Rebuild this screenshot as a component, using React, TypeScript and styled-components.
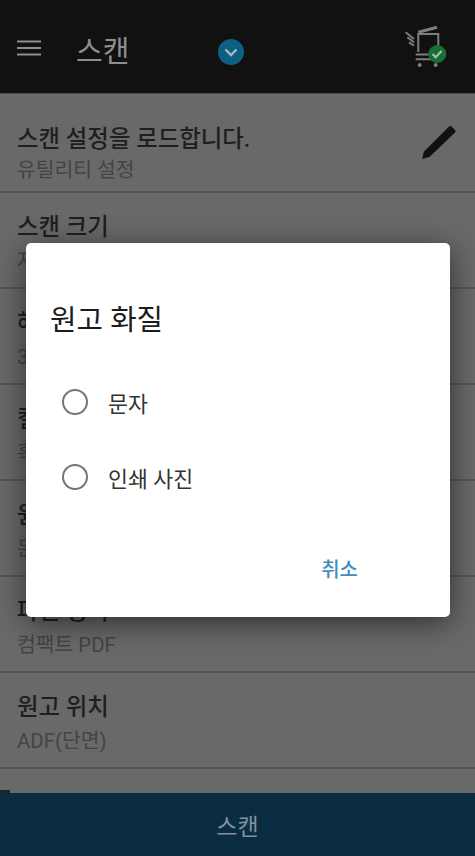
import React from 'react';
import styled, { createGlobalStyle } from 'styled-components';

const GlobalStyle = createGlobalStyle`
  html, body {
    margin: 0;
    padding: 0;
    background: #696969;
  }
  body {
    font-family: "Roboto", "Noto Sans CJK KR", sans-serif;
  }
`;

const settings = [
  { label: '스캔 설정을 로드합니다.', value: '유틸리티 설정', edit: true },
  { label: '스캔 크기', value: '자동' },
  { label: '해상도', value: '300 dpi' },
  { label: '컬러 모드', value: '흑백' },
  { label: '원고 화질', value: '문자' },
  { label: '파일 형식', value: '컴팩트 PDF' },
  { label: '원고 위치', value: 'ADF(단면)' },
];

const options = ['문자', '인쇄 사진'];

export default function App() {
  return (
    <Screen>
      <GlobalStyle />
      <Header>
        <MenuIcon viewBox="0 0 26 18">
          <path d="M1 2.500h24M1 9h24M1 15.500h24" />
        </MenuIcon>
        <HeaderTitle>스캔</HeaderTitle>
        <DropBadge viewBox="0 0 26 26">
          <circle cx="13" cy="13" r="13" fill="#0f5f85" />
          <path d="M7.500 10.500l5.500 5.500 5.500-5.500" fill="none" stroke="#a9b9c1" strokeWidth="2.400" />
        </DropBadge>
        <PrinterIcon viewBox="0 0 44 44">
          <g fill="none" stroke="#7d7d7d" strokeWidth="2">
            <path d="M1.700 7.300L10 14M3.300 12.300L10 17.300M5 17.300l5 3.400" />
            <path d="M14.300 27V9h20v18" />
            <path d="M14.300 7.300L33 2.300" strokeWidth="3" />
            <path d="M11.700 29.500H31M11.700 34.300H28" />
          </g>
          <circle cx="15.700" cy="40" r="2" fill="#7d7d7d" />
          <circle cx="31.700" cy="40" r="2" fill="#7d7d7d" />
          <circle cx="33.300" cy="29" r="9" fill="#1a6d35" />
          <path d="M28.500 29l3.200 3.300 5.800-6.300" fill="none" stroke="#a7c4ae" strokeWidth="2" />
        </PrinterIcon>
      </Header>

      <List>
        {settings.map((item, index) => (
          <Row key={item.label} $first={index === 0}>
            <RowText $first={index === 0}>
              <RowLabel>{item.label}</RowLabel>
              <RowValue>{item.value}</RowValue>
            </RowText>
            {item.edit && (
              <PencilIcon viewBox="0 0 36 36">
                <path d="M0 36l2-7.500L27 3.500c.8-.8 1.800-.8 2.600 0l3.400 3.400c.8.800.8 1.800 0 2.600L7.500 34z" fill="#111" />
              </PencilIcon>
            )}
          </Row>
        ))}
      </List>

      <ScanBar>
        <CornerMark />
        <ScanLabel>스캔</ScanLabel>
      </ScanBar>

      <Dialog>
        <DialogTitle>원고 화질</DialogTitle>
        <OptionList>
          {options.map(option => (
            <Option key={option}>
              <Radio />
              <OptionLabel>{option}</OptionLabel>
            </Option>
          ))}
        </OptionList>
        <DialogActions>
          <CancelButton>취소</CancelButton>
        </DialogActions>
      </Dialog>
    </Screen>
  );
}

const Screen = styled.div`
  position: relative;
  display: flex;
  flex-direction: column;
  width: 475px;
  height: 856px;
  overflow: hidden;
  background: #696969;
`;

const Header = styled.header`
  display: flex;
  align-items: center;
  flex: 0 0 94px;
  box-sizing: border-box;
  padding: 0 27px 0 16px;
  background: #111;
  border-bottom: 1px solid #4c4c4c;
`;

const MenuIcon = styled.svg`
  flex: none;
  width: 26px;
  height: 18px;
  margin-top: 2px;
  fill: none;
  stroke: #8f8f8f;
  stroke-width: 2.200;
`;

const HeaderTitle = styled.h1`
  flex: none;
  width: 113px;
  margin: 4px 0 0 34px;
  font-size: 29px;
  font-weight: 400;
  color: #8e8e8e;
`;

const DropBadge = styled.svg`
  flex: none;
  width: 26px;
  height: 26px;
  margin: 10px 0 0 29px;
`;

const PrinterIcon = styled.svg`
  flex: none;
  width: 44px;
  height: 44px;
  margin: 0 0 0 auto;
`;

const List = styled.div`
  flex: 1;
  min-height: 0;
  padding-top: 3px;
  overflow: hidden;
`;

const Row = styled.div<{ $first?: boolean }>`
  display: flex;
  align-items: center;
  justify-content: space-between;
  box-sizing: border-box;
  height: 96px;
  padding: ${props => (props.$first ? '18px' : '5px')} 17px 0;
  border-bottom: 2px solid #555;
`;

const RowText = styled.div<{ $first?: boolean }>`
  display: flex;
  flex-direction: column;
  gap: ${props => (props.$first ? '3px' : '6px')};
`;

const RowLabel = styled.span`
  font-size: 23.400px;
  font-weight: 500;
  line-height: 30px;
  color: #1f1f1f;
`;

const RowValue = styled.span`
  font-size: 20.400px;
  line-height: 26px;
  color: #444;
`;

const PencilIcon = styled.svg`
  flex: none;
  width: 36px;
  height: 36px;
  margin: 0 0 25px;
`;

const ScanBar = styled.div`
  position: relative;
  display: flex;
  align-items: center;
  justify-content: center;
  flex: 0 0 63px;
  background: #0a2d42;
`;

const CornerMark = styled.span`
  position: absolute;
  left: 0;
  top: -3px;
  width: 10px;
  height: 3px;
  background: #222;
`;

const ScanLabel = styled.span`
  font-size: 23px;
  color: #82929b;
`;

const Dialog = styled.section`
  position: absolute;
  left: 26px;
  top: 243px;
  display: flex;
  flex-direction: column;
  box-sizing: border-box;
  width: 424px;
  height: 374px;
  padding: 57px 24px 0;
  background: #fff;
  border-radius: 5px;
  box-shadow: 0 6px 30px rgba(0, 0, 0, 0.55);
`;

const DialogTitle = styled.h2`
  margin: 0;
  font-size: 28.800px;
  line-height: 40px;
  font-weight: 400;
  color: #1c1c1c;
`;

const OptionList = styled.div`
  display: flex;
  flex-direction: column;
  gap: 27px;
  margin-top: 38px;
`;

const Option = styled.label`
  display: flex;
  align-items: center;
  gap: 20px;
  height: 48px;
  padding-left: 12px;
`;

const Radio = styled.span`
  flex: none;
  box-sizing: border-box;
  width: 26px;
  height: 26px;
  border: 2px solid #757575;
  border-radius: 50%;
`;

const OptionLabel = styled.span`
  font-size: 21.700px;
  color: #333;
`;

const DialogActions = styled.div`
  display: flex;
  justify-content: flex-end;
  margin-top: auto;
  padding: 0 68px 32px 0;
`;

const CancelButton = styled.button`
  padding: 0;
  border: 0;
  background: none;
  font-family: inherit;
  font-size: 20px;
  font-weight: 500;
  line-height: 30px;
  color: #3f8fbe;
`;
